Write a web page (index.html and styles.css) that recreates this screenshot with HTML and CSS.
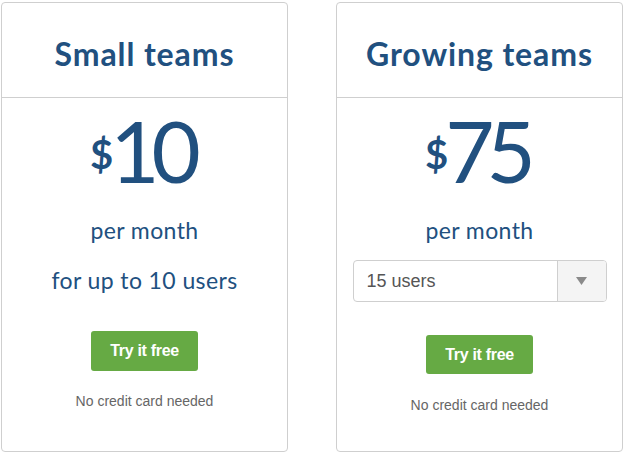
FILE: index.html
```html
<!DOCTYPE html>
<html>
<head>
<meta charset="utf-8">
<link rel="stylesheet" href="styles.css">
</head>
<body>
<div class="plans">
  <div class="card">
    <div class="card-head"><h2 class="title">Small teams</h2></div>
    <div class="card-body">
      <div class="price"><span class="cur">$</span><span class="amt">10</span></div>
      <div class="per">per month</div>
      <div class="users">for up to 10 users</div>
      <a class="btn btn-a">Try it free</a>
      <div class="note">No credit card needed</div>
    </div>
  </div>
  <div class="card">
    <div class="card-head"><h2 class="title">Growing teams</h2></div>
    <div class="card-body">
      <div class="price"><span class="cur">$</span><span class="amt">75</span></div>
      <div class="per">per month</div>
      <div class="select">
        <span class="select-val">15 users</span>
        <span class="select-arrow"><svg width="11" height="8" viewBox="0 0 11 8"><path d="M0 0H11L5.5 8Z" fill="#8a8a8a"/></svg></span>
      </div>
      <a class="btn btn-b">Try it free</a>
      <div class="note note-b">No credit card needed</div>
    </div>
  </div>
</div>
</body>
</html>
```
FILE: styles.css
```css
* { box-sizing: border-box; }
html, body { margin: 0; padding: 0; background: #fff; }
body { font-family: "Lato", "Liberation Sans", sans-serif; color: #21507f; }
.plans {
  display: grid;
  grid-template-columns: 287px 287px;
  column-gap: 48px;
  padding: 2px 0 0 1px;
}
.card {
  height: 450px;
  border: 1px solid #cfcfcf;
  border-radius: 4px;
  display: flex;
  flex-direction: column;
}
.card-head {
  height: 95px;
  border-bottom: 1px solid #cfcfcf;
  display: flex;
  align-items: center;
  justify-content: center;
  padding-top: 6px;
}
.title {
  margin: 0;
  font-size: 32px;
  font-weight: 700;
  color: #21507f;
  letter-spacing: 0.9px;
}
.card-body {
  display: flex;
  flex-direction: column;
  align-items: center;
  padding: 10px 15px 0;
}
.price {
  display: flex;
  align-items: flex-start;
  line-height: 1;
  height: 85px;
  padding-right: 6px;
}
.cur {
  font-size: 40px;
  font-weight: 700;
  margin-top: 26px;
  letter-spacing: -3px;
}
.amt {
  font-size: 85px;
  letter-spacing: -8px;
}
.per {
  font-size: 23px;
  margin-top: 22px;
  line-height: 30px;
  letter-spacing: 0.4px;
}
.users {
  font-size: 23px;
  line-height: 42px;
  margin-top: 14px;
  letter-spacing: 0.4px;
}
.select {
  margin-top: 15px;
  width: 254px;
  height: 42px;
  border: 1px solid #cfcfcf;
  border-radius: 4px;
  display: flex;
  align-items: stretch;
  font-family: "Liberation Sans", Arial, sans-serif;
}
.select-val {
  flex: 1;
  display: flex;
  align-items: center;
  padding-left: 13px;
  font-size: 18px;
  color: #555;
}
.select-arrow {
  width: 49px;
  background: #f4f4f4;
  border-left: 1px solid #cfcfcf;
  border-radius: 0 3px 3px 0;
  display: flex;
  align-items: center;
  justify-content: center;
}
.btn {
  display: flex;
  align-items: center;
  justify-content: center;
  width: 107px;
  height: 40px;
  background: #66aa44;
  color: #fff;
  border-radius: 3px;
  font-family: "Liberation Sans", Arial, sans-serif;
  font-weight: 700;
  font-size: 16px;
  letter-spacing: -0.3px;
}
.btn-a { margin-top: 30px; }
.btn-b { margin-top: 33px; height: 39px; }
.note {
  margin-top: 22px;
  font-family: "Liberation Sans", Arial, sans-serif;
  font-size: 14px;
  color: #666;
}
.note-b { margin-top: 23px; }
```
